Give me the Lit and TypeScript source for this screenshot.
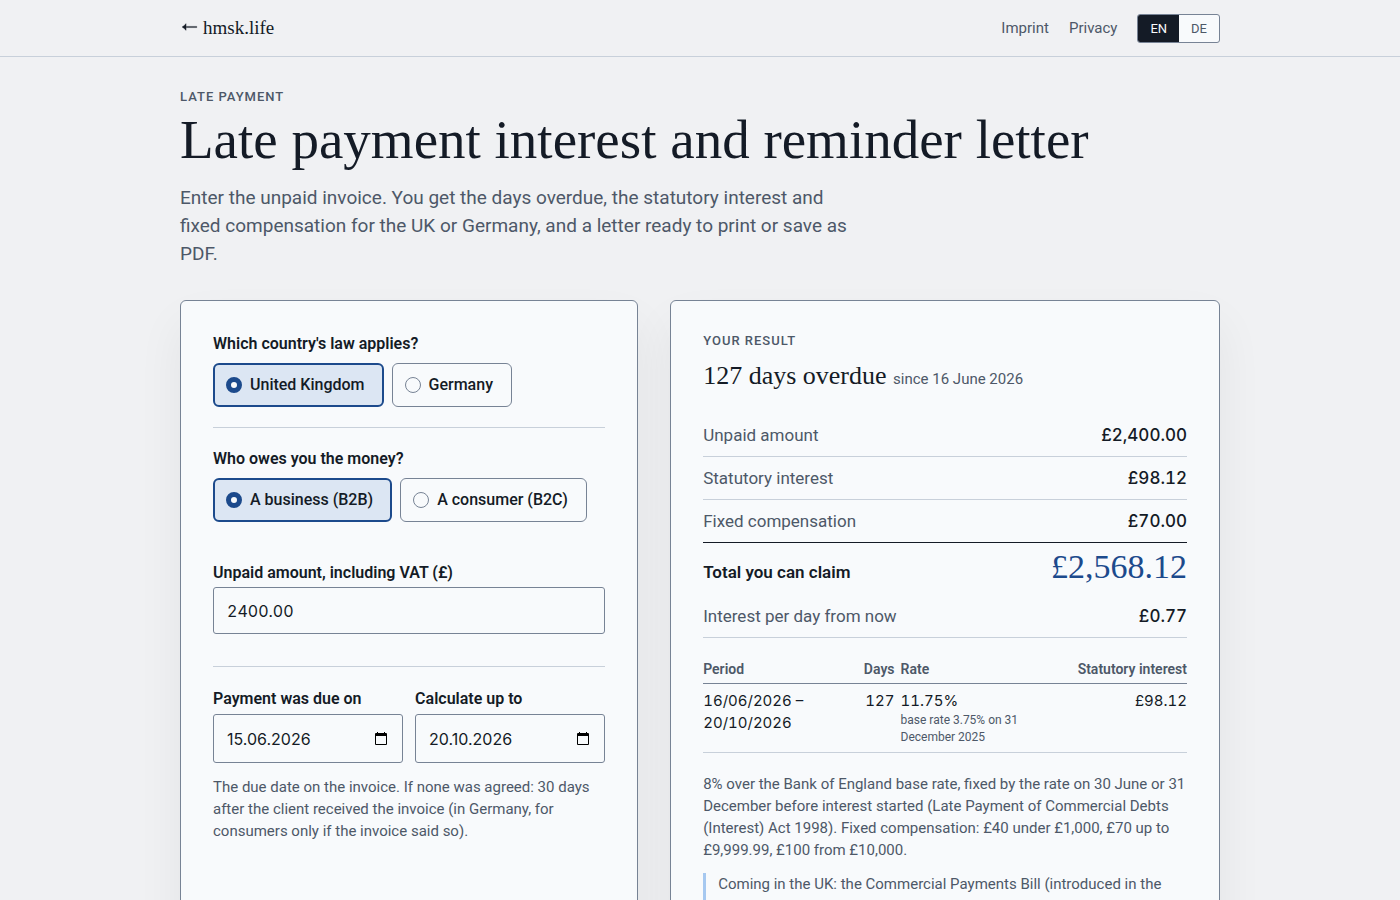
import { LitElement, html, css, svg } from "lit";
import { customElement, state } from "lit/decorators.js";

const calendar = svg`
  <svg viewBox="0 0 12 13" width="12" height="13" aria-hidden="true">
    <path d="M2 0h1v1h6V0h1v1h1a1 1 0 0 1 1 1v10a1 1 0 0 1-1 1H1a1 1 0 0 1-1-1V2a1 1 0 0 1 1-1h1zM1 4v8h10V4z" fill="#000" fill-rule="evenodd"/>
  </svg>`;

interface Choice {
  value: string;
  label: string;
}

const countries: Choice[] = [
  { value: "uk", label: "United Kingdom" },
  { value: "de", label: "Germany" },
];

const debtors: Choice[] = [
  { value: "b2b", label: "A business (B2B)" },
  { value: "b2c", label: "A consumer (B2C)" },
];

@customElement("app-root")
export class AppRoot extends LitElement {
  @state() private country = "uk";
  @state() private debtor = "b2b";

  static styles = css`
    :host {
      --ink: #141b26;
      --muted: #4d5868;
      --line: #c8d0da;
      --edge: #778395;
      --accent: #1c4a8c;
      --tint: #dce6f3;
      --paper: #f8fafc;
      --serif: "Liberation Serif", serif;
      --figures: Inter, sans-serif;
      display: block;
      min-height: 100vh;
      background: #f0f1f3;
      color: var(--ink);
      font: 400 17px/24px Roboto, sans-serif;
    }
    * { box-sizing: border-box; }
    h1, h2, p, dl, dd, fieldset { margin: 0; }
    fieldset { border: 0; padding: 0; min-width: 0; }
    button, input { font: inherit; color: inherit; }
    a { color: inherit; text-decoration: none; }
    .wrap {
      max-width: 1088px;
      margin: 0 auto;
      padding: 0 24px;
    }
    .top { border-bottom: 1px solid var(--line); }
    .bar {
      display: flex;
      align-items: center;
      justify-content: space-between;
      height: 56px;
    }
    .home {
      display: flex;
      align-items: center;
      gap: 5px;
      font: 500 19px/24px var(--serif);
    }
    .home svg { margin-bottom: 2px; }
    .links {
      display: flex;
      align-items: center;
      gap: 20px;
      color: var(--muted);
      font-size: 15px;
    }
    .lang {
      display: flex;
      border: 1px solid var(--edge);
      border-radius: 3px;
      overflow: hidden;
      background: var(--paper);
    }
    .lang button {
      border: 0;
      padding: 0 12px;
      background: none;
      font: 400 13px/27px Roboto, sans-serif;
    }
    .lang .on { background: var(--ink); color: var(--paper); }
    .eyebrow {
      font-size: 13px;
      font-weight: 500;
      line-height: 16px;
      letter-spacing: 1px;
      text-transform: uppercase;
      color: var(--muted);
    }
    .intro { padding: 32px 0; }
    h1 {
      padding: 5px 0 14px;
      font: 400 55px/60px var(--serif);
    }
    .lead {
      max-width: 680px;
      font-size: 19px;
      line-height: 28px;
      color: var(--muted);
    }
    .cards {
      display: grid;
      grid-template-columns: minmax(0, 5fr) minmax(0, 6fr);
      gap: 32px;
      padding-bottom: 64px;
    }
    .card {
      padding: 32px;
      background: var(--paper);
      border: 1px solid var(--edge);
      border-radius: 6px;
      box-shadow: 0 24px 48px rgb(20 24 30 / 6%);
    }
    .form { padding-top: 33px; }
    .label {
      display: block;
      padding: 0;
      font-size: 16px;
      font-weight: 600;
      line-height: 20px;
    }
    .group {
      padding-bottom: 20px;
      margin-bottom: 21px;
      border-bottom: 1px solid var(--line);
    }
    .choices {
      display: flex;
      flex-wrap: wrap;
      gap: 8px;
      padding-top: 9px;
    }
    .choice {
      display: flex;
      align-items: center;
      gap: 8px;
      height: 44px;
      padding: 0 18px 0 12px;
      border: 1px solid var(--edge);
      border-radius: 6px;
      font-size: 16px;
      font-weight: 500;
    }
    .choice.on {
      padding: 0 17px 0 11px;
      border: 2px solid var(--accent);
      background: var(--tint);
    }
    .choice input {
      appearance: none;
      width: 16px;
      height: 16px;
      margin: 0;
      border: 1px solid var(--edge);
      border-radius: 50%;
      background: var(--paper);
    }
    .choice input:checked { border: 5px solid var(--accent); }
    .amount {
      padding: 41px 0 32px;
      margin-bottom: 22px;
      border-bottom: 1px solid var(--line);
    }
    .field {
      display: flex;
      align-items: center;
      width: 100%;
      height: 47px;
      margin-top: 4px;
      padding: 0 13px;
      border: 1px solid var(--edge);
      border-radius: 3px;
      background: var(--paper);
      font: 400 16px/24px var(--figures);
      font-variant-numeric: tabular-nums;
    }
    .dates {
      display: grid;
      grid-template-columns: repeat(2, minmax(0, 1fr));
      gap: 12px;
    }
    .date {
      height: 49px;
      margin-top: 5px;
      padding-right: 15px;
      font-variant-numeric: normal;
    }
    .date input {
      flex: 1;
      min-width: 0;
      padding: 0;
      border: 0;
      background: none;
    }
    .date button {
      display: flex;
      padding: 0;
      border: 0;
      background: none;
    }
    .small {
      font-size: 15px;
      line-height: 22px;
      color: var(--muted);
    }
    .hint { padding-top: 13px; }
    h2 {
      padding: 11px 0 22px;
      font: 400 26px/32px var(--serif);
    }
    .since {
      font: 400 15px/24px Roboto, sans-serif;
      color: var(--muted);
    }
    .row {
      display: flex;
      align-items: center;
      justify-content: space-between;
      padding: 9px 0;
      border-bottom: 1px solid var(--line);
      color: var(--muted);
    }
    .row dd {
      color: var(--ink);
      font: 500 17px/24px var(--figures);
      font-variant-numeric: tabular-nums;
    }
    .row.last { border-color: var(--ink); }
    .row.total {
      align-items: baseline;
      padding: 4px 0 8px;
      border: 0;
      color: var(--ink);
      font-weight: 600;
    }
    .row.total dd {
      font: 400 34px/40px var(--serif);
      color: var(--accent);
    }
    table {
      width: 100%;
      margin: 21px 0 20px;
      border-collapse: collapse;
      font: 400 15px/22px var(--figures);
      font-variant-numeric: tabular-nums;
    }
    th {
      padding: 0 6px 4px 0;
      border-bottom: 1px solid var(--edge);
      text-align: left;
      font: 600 14px/20px Roboto, sans-serif;
      color: var(--muted);
    }
    td {
      padding: 6px 6px 6px 0;
      border-bottom: 1px solid var(--line);
      vertical-align: top;
    }
    .period { width: 31%; }
    .rate { width: 30%; }
    .end { text-align: right; }
    .end:last-child { padding-right: 0; }
    .basis {
      display: block;
      font: 400 12px/17px Roboto, sans-serif;
      color: var(--muted);
    }
    .notice {
      margin-top: 12px;
      padding: 0 0 48px 12px;
      border-left: 3px solid #a6c8f0;
    }
  `;

  private choices(name: "country" | "debtor", list: Choice[]) {
    return html`<div class="choices">
      ${list.map(
        (c) => html`<label class="choice ${this[name] === c.value ? "on" : ""}">
          <input type="radio" name=${name} .checked=${this[name] === c.value}
            @change=${() => { this[name] = c.value; }} />${c.label}
        </label>`,
      )}
    </div>`;
  }

  private dateField(id: string, label: string, value: string) {
    return html`<div>
      <label class="label" for=${id}>${label}</label>
      <div class="field date">
        <input id=${id} type="text" inputmode="numeric" value=${value} />
        <button type="button" aria-label="Open calendar">${calendar}</button>
      </div>
    </div>`;
  }

  render() {
    return html`
      <header class="top">
        <div class="wrap bar">
          <a class="home" href="#">
            <svg viewBox="0 0 18 12" width="18" height="12" aria-hidden="true">
              <path d="M2 6Q4.500 4.800 6 2.600Q6.300 4 6 5.400H16.800V6.600H6Q6.300 8 6 9.400Q4.500 7.200 2 6Z" fill="currentColor" stroke="currentColor" stroke-width=".3"/>
            </svg>hmsk.life</a>
          <nav class="links">
            <a href="#">Imprint</a>
            <a href="#">Privacy</a>
            <div class="lang">
              <button type="button" class="on">EN</button>
              <button type="button">DE</button>
            </div>
          </nav>
        </div>
      </header>
      <main class="wrap">
        <div class="intro">
          <p class="eyebrow">Late payment</p>
          <h1>Late payment interest and reminder letter</h1>
          <p class="lead">Enter the unpaid invoice. You get the days overdue, the statutory interest and fixed compensation for the UK or Germany, and a letter ready to print or save as PDF.</p>
        </div>
        <div class="cards">
          <form class="card form">
            <fieldset class="group">
              <legend class="label">Which country's law applies?</legend>
              ${this.choices("country", countries)}
            </fieldset>
            <fieldset>
              <legend class="label">Who owes you the money?</legend>
              ${this.choices("debtor", debtors)}
            </fieldset>
            <div class="amount">
              <label class="label" for="amount">Unpaid amount, including VAT (£)</label>
              <input class="field" id="amount" type="text" inputmode="decimal" value="2400.00" />
            </div>
            <div class="dates">
              ${this.dateField("due", "Payment was due on", "15.06.2026")}
              ${this.dateField("until", "Calculate up to", "20.10.2026")}
            </div>
            <p class="small hint">The due date on the invoice. If none was agreed: 30 days after the client received the invoice (in Germany, for consumers only if the invoice said so).</p>
          </form>
          <section class="card">
            <p class="eyebrow">Your result</p>
            <h2>127 days overdue <span class="since">since 16 June 2026</span></h2>
            <dl>
              <div class="row"><dt>Unpaid amount</dt><dd>£2,400.00</dd></div>
              <div class="row"><dt>Statutory interest</dt><dd>£98.12</dd></div>
              <div class="row last"><dt>Fixed compensation</dt><dd>£70.00</dd></div>
              <div class="row total"><dt>Total you can claim</dt><dd>£2,568.12</dd></div>
              <div class="row"><dt>Interest per day from now</dt><dd>£0.77</dd></div>
            </dl>
            <table>
              <thead>
                <tr><th class="period">Period</th><th class="end">Days</th><th class="rate">Rate</th><th class="end">Statutory interest</th></tr>
              </thead>
              <tbody>
                <tr>
                  <td>16/06/2026 –<br />20/10/2026</td>
                  <td class="end">127</td>
                  <td>11.75%<span class="basis">base rate 3.75% on 31 December 2025</span></td>
                  <td class="end">£98.12</td>
                </tr>
              </tbody>
            </table>
            <p class="small">8% over the Bank of England base rate, fixed by the rate on 30 June or 31 December before interest started (Late Payment of Commercial Debts (Interest) Act 1998). Fixed compensation: £40 under £1,000, £70 up to £9,999.99, £100 from £10,000.</p>
            <p class="small notice">Coming in the UK: the Commercial Payments Bill (introduced in the</p>
          </section>
        </div>
      </main>
    `;
  }
}
